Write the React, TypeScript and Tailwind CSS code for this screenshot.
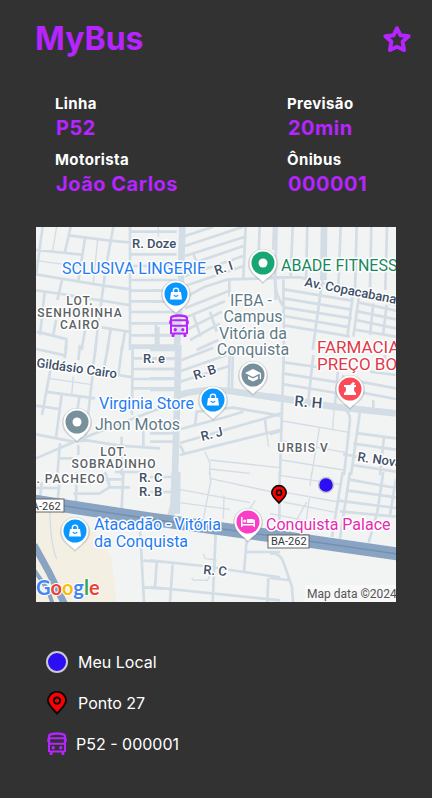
import type { ReactNode } from 'react';

type Sector = { x: number; y: number; wide?: string; roads: string; lanes?: string };

/* Street geometry, one entry per map sector. Sector units are a third of a map unit. */
const sectors: Sector[] = [
  {
    x: 30, y: 220,
    roads:
      'M18 90L155 104M18 163L220 197L303 208M18 211L95 222L303 256M38 20L18 165M122 20L105 95M115 46L240 62L303 68M165 55L145 182M250 20L228 140L203 325L196 390M300 20V390M96 180L82 240M78 300L70 345M44 215L30 345M20 335L112 358M215 322L303 336M242 328L232 390M285 334L276 390M110 358L106 390M303 35H440M303 103H440M303 138H440M303 180H440M303 212H440M303 244H440M303 276H440M303 310H440M303 346H440M303 377H440M155 390L165 330M378 310V375',
    lanes: 'M18 122L152 140M80 20L68 92M203 60L190 188M385 20V50',
  },
  {
    x: 150, y: 220,
    wide: 'M97 20L92 200L80 390',
    roads:
      'M105 48L190 20M105 78L205 45L280 20M105 108L285 50M105 138L280 78M105 168L280 108M130 100L142 135M105 198L282 138M100 235L165 200L235 178L390 174M238 178V230M287 20L280 175M329 20L326 100M372 20L370 90M105 265L238 212M105 293L225 244M110 330L215 275M120 360L210 310M130 285L152 350M180 275L200 335M140 390L205 360M375 160L377 240M0 212H55M0 245H50M25 320V375M0 345H70M0 380H70',
  },
  {
    x: 270, y: 220,
    wide: 'M162 20L160 180',
    roads:
      'M20 20L15 180M68 20L62 170M112 20L108 180M212 20L205 200M260 20L255 215M304 20L300 210M351 20L346 210M0 172H90L150 186L378 255M40 178L42 390M15 180Q15 225 42 262M42 208L245 242M42 235L245 269M42 262L245 295M42 288L240 322M42 316L240 349M157 180L128 390M250 215L232 350M268 220L250 350M265 247L378 272M262 274L378 298M258 300L378 325M250 328L378 350M350 255L340 340M310 250L300 345',
  },
  {
    x: 30, y: 345,
    roads:
      'M18 12L108 32M110 0L104 40M150 0L145 45M198 0L190 60M235 0L222 70M277 0L265 90L310 97M62 70L36 210M45 140L195 160M18 182L88 192M95 150L78 278M190 70L165 290M148 158L140 205M18 268L130 290L170 286L270 302L390 310M18 340L130 292L220 255L390 190M308 0L306 210M310 8H440M310 40H440M310 72H440M310 102H440M310 130H440M275 275V390M340 235V305M90 295L82 390M145 300V330M85 340H130',
    lanes: 'M55 100L180 118M130 95L125 150',
  },
  {
    x: 150, y: 345,
    wide: 'M85 0L82 150L75 390M88 150Q150 130 240 138L390 160',
    roads:
      'M95 45L190 8M92 78L230 30M90 110L240 62M240 0L236 130M249 0L246 135M92 252L220 218L280 200M90 294L380 210M90 330L200 302L390 255M135 240L140 200L250 188L390 212M345 225L350 265M90 300L104 328M0 15H75M0 42H75M0 72H75M0 100H75M0 135H75M0 265H75M0 290H75',
    lanes: 'M350 265L356 306M165 320L180 355L178 390M180 345L390 368M180 372L300 385',
  },
  {
    x: 270, y: 345,
    wide: 'M0 155L190 185L378 205',
    roads:
      'M42 0L30 390M130 30L115 165M42 52L140 66M42 86L205 112M42 118L200 144M205 60L195 180M270 110L378 130M272 142L378 162M310 165V195M300 80L378 90M345 30V60M270 200L243 390M218 190Q240 200 240 225L222 390M265 265L378 280M250 296L378 314M220 328L260 334M342 275L330 390M245 360L378 380M0 215L32 205M0 268L32 258M220 90L215 115',
    lanes: 'M193 185L188 250M38 228L238 262M148 250L125 390M38 288L225 322M34 345L220 375',
  },
  {
    x: 30, y: 472,
    roads:
      'M35 30L30 80M18 48H90M90 20L82 92M140 0L138 92M130 65H208L238 46H300M225 0L240 46M280 0L275 110M222 22H275M255 0H330M330 170L342 390M340 266L400 270M342 346L400 350',
    lanes: 'M60 120Q60 210 80 262',
  },
  {
    x: 150, y: 472,
    wide: 'M75 0L70 100L62 132M82 0L80 125',
    roads:
      'M197 185L188 390M290 205L282 300M0 265L160 282L282 300L390 316M0 345L390 385M20 272L15 348M68 278L60 390M290 240H390M355 318L352 390M0 15H70M0 60H70',
    lanes:
      'M160 245L166 260L200 264M125 318L130 324L172 325L184 304M180 0L182 30L160 140M88 52L300 92M88 92L240 112M222 70L220 140M182 20L390 65M316 85L295 115',
  },
  {
    x: 270, y: 472,
    roads:
      'M218 0L186 195M240 0L210 200M340 0L322 120L296 212M235 22L378 48M230 55L378 76M205 86L378 108M210 118L378 134M29 0L28 180M0 245Q30 240 42 275L66 345L69 390M0 318L55 324M378 20L360 130',
    lanes: 'M29 10L215 38M29 58L205 90M125 0L120 42M40 90L200 122M118 78L108 150M110 90L60 180M0 125L180 160',
  },
];

function StarIcon() {
  return (
    <svg viewBox="0 0 28 28" className="h-7 w-7" fill="none" stroke="#b624ff" strokeWidth="4" strokeLinejoin="round" aria-hidden="true">
      <path d="M14 3.300l3.500 7 8.100 1-5.900 5.300 1.300 8.400-7-3.200-7 3.200 1.300-8.400-5.900-5.300 8.100-1z" />
    </svg>
  );
}

function BusShape() {
  return (
    <g>
      <path
        fill="#b624ff"
        fillRule="evenodd"
        d="M4.200 .9Q10 -.2 15.800 .9Q19 1.400 19 4V20H17.400V22.200Q17.400 23 16.500 23H15.400Q14.500 23 14.500 22.200V20.400H5.500V22.200Q5.500 23 4.600 23H3.500Q2.600 23 2.600 22.200V20H1V4Q1 1.400 4.200 .9ZM4 3.600Q10 2 16 3.600Q17 4 17 5.200H3Q3 4 4 3.600ZM3.200 7.200V10.800H16.800V7.200ZM3 12.800V18.500H17V12.800Z"
      />
      <path fill="#b624ff" d="M.2 6.500H1.500V10H.2ZM18.500 6.500H19.800V10H18.500Z" />
      <circle cx="6.200" cy="15.700" r="1.700" fill="#b624ff" />
      <circle cx="13.800" cy="15.700" r="1.700" fill="#b624ff" />
    </g>
  );
}

function StopShape() {
  return (
    <g fill="#ff0000" stroke="#0a0a0a">
      <path strokeWidth="2" d="M10 22.500C6.500 18.700 1 14.300 1 9.600A9 8.800 0 0 1 19 9.600C19 14.300 13.500 18.700 10 22.500Z" />
      <circle cx="10" cy="9.600" r="3.200" strokeWidth="2" />
    </g>
  );
}

function PlacePin({ x, y, color, children }: { x: number; y: number; color: string; children: ReactNode }) {
  return (
    <g transform={`translate(${x} ${y})`}>
      <path d="M0 21C-4 16-15 11-15 1A15 15 0 0 1 15 1C15 11 4 16 0 21Z" fill="#8b9299" opacity=".35" />
      <path d="M0 19C-4 14.500-13.500 10-13.500 0A13.500 13.500 0 0 1 13.500 0C13.500 10 4 14.500 0 19Z" fill="#fff" />
      <circle r="11.500" fill={color} />
      {children}
    </g>
  );
}

function Bag() {
  return (
    <g>
      <path d="M-5-2H5L6 5.500H-6Z" fill="#fff" />
      <path d="M-2.600-1V-3.300A2.600 2.600 0 0 1 2.600-3.300V-1" fill="none" stroke="#fff" strokeWidth="1.400" />
      <path d="M-2.200 1.200Q0 3.600 2.200 1.200" fill="none" stroke="#0a96ff" strokeWidth="1.100" />
    </g>
  );
}

function CityMap() {
  return (
    <svg viewBox="36 227 360 375" className="block h-auto w-full bg-[#f2f3f3]" role="img" aria-label="Mapa da linha P52">
      <path d="M36 510L62 511L90 527L111 556L117 602H36Z" fill="#f4efe3" />
      <g fill="none" stroke="#d3dde5" strokeLinejoin="round">
        {sectors.map((s) => (
          <g key={`${s.x}-${s.y}`} transform={`translate(${s.x} ${s.y}) scale(.33333)`}>
            {s.lanes && <path d={s.lanes} strokeWidth="4" />}
            <path d={s.roads} strokeWidth="8" />
            {s.wide && <path d={s.wide} strokeWidth="20" />}
          </g>
        ))}
      </g>
      <g fill="none">
        <path d="M34 501L65 506L150 519L280 537L398 554" stroke="#89a3c2" strokeWidth="13" />
        <path d="M34 501L65 506L150 519L280 537L398 554" stroke="#7390b4" strokeWidth="1.500" />
        <path d="M34 545L49 572L65 605" stroke="#89a3c2" strokeWidth="7" />
        <path d="M34 570L48 590L53 605" stroke="#89a3c2" strokeWidth="4" />
      </g>

      <g stroke="#fff" strokeWidth="3" strokeLinejoin="round" paintOrder="stroke" fontFamily="Roboto, sans-serif">
        <g fill="#3d5068" fontSize="13" fontWeight="500">
          <text x="132" y="248">R. Doze</text>
          <text x="216" y="275" transform="rotate(-18 216 275)">R. I</text>
          <text x="304" y="286" transform="rotate(11 304 286)">Av. Copacabana</text>
          <text x="143" y="363">R. e</text>
          <text x="36" y="367" transform="rotate(8 36 367)">Gildásio Cairo</text>
          <text x="195" y="380" transform="rotate(-18 195 380)">R. B</text>
          <text x="202" y="441" transform="rotate(-14 202 441)">R. J</text>
          <text x="294" y="406" fontSize="15" transform="rotate(5 294 406)">R. H</text>
          <text x="357" y="461" transform="rotate(8 357 461)">R. Nova</text>
          <text x="139" y="482">R. C</text>
          <text x="139" y="496">R. B</text>
          <text x="203" y="574" transform="rotate(5 203 574)">R. C</text>
        </g>
        <g fill="#5b6166" fontSize="12" fontWeight="500" letterSpacing="1" textAnchor="middle">
          <text x="80" y="305">LOT.</text>
          <text x="80" y="317">SENHORINHA</text>
          <text x="80" y="329">CAIRO</text>
          <text x="114" y="456">LOT.</text>
          <text x="114" y="468">SOBRADINHO</text>
          <text x="303" y="452">URBIS V</text>
          <text x="71" y="483">. PACHECO</text>
        </g>
        <g fontSize="16">
          <g fill="#1f7cf2">
            <text x="62" y="274">SCLUSIVA LINGERIE</text>
            <text x="99" y="409">Virginia Store</text>
            <text x="94" y="530">Atacadão - Vitória</text>
            <text x="94" y="547">da Conquista</text>
          </g>
          <g fill="#5f7b88">
            <text x="95" y="430" fontSize="16">Jhon Motos</text>
            <g textAnchor="middle">
              <text x="251" y="306">IFBA -</text>
              <text x="253" y="322">Campus</text>
              <text x="253" y="339">Vitória da</text>
              <text x="253" y="355">Conquista</text>
            </g>
          </g>
          <text x="281" y="271" fill="#168a5e">ABADE FITNESS</text>
          <g fill="#e03a48" fontSize="17">
            <text x="317" y="353">FARMACIA</text>
            <text x="317" y="370">PREÇO BOM</text>
          </g>
          <text x="266" y="530" fill="#e52cb0">Conquista Palace</text>
        </g>
      </g>

      <g fontFamily="Roboto, sans-serif" fontSize="11" fill="#35393d">
        <rect x="20" y="499" width="44" height="13" fill="#fff" stroke="#666" />
        <text x="25" y="510">BA-262</text>
        <rect x="268" y="535" width="41" height="13" fill="#fff" stroke="#666" />
        <text x="271" y="545">BA-262</text>
      </g>

      <PlacePin x={176} y={294} color="#0a96ff"><Bag /></PlacePin>
      <PlacePin x={213} y={400} color="#0a96ff"><Bag /></PlacePin>
      <PlacePin x={75} y={531} color="#0a96ff"><Bag /></PlacePin>
      <PlacePin x={263} y={263} color="#18a673"><circle r="4.500" fill="#fff" /></PlacePin>
      <PlacePin x={77} y={422} color="#78909c"><circle r="4.500" fill="#fff" /></PlacePin>
      <PlacePin x={253} y={375} color="#78909c">
        <path d="M0-6L8-2L0 2L-8-2ZM-5 1L0 3.500L5 1V4L0 6.500L-5 4ZM6.800-1.500H8V4H6.800Z" fill="#fff" />
      </PlacePin>
      <PlacePin x={350} y={389} color="#fb4b57">
        <path d="M-6-4H0L3-7L5-6L4-4H6V-2H4.500Q3 2 6 4V6H-6V4Q-3 2-4.500-2H-6Z" fill="#fff" />
      </PlacePin>
      <PlacePin x={248} y={522} color="#fa3fc6">
        <path d="M-7-5H-5.500V2H5.500V-1Q5.500-2.500 7-2.500V5H5.500V3.500H-5.500V5H-7ZM-1-3H4.500Q6-3 6-1V1H-1Z" fill="#fff" />
        <circle cx="-3.200" cy="-1" r="1.600" fill="#fff" />
      </PlacePin>

      <text x="36" y="595" fontFamily="Lato, sans-serif" fontSize="20" fontWeight="700" stroke="#fff" strokeWidth="2" paintOrder="stroke">
        <tspan fill="#4285f4">G</tspan>
        <tspan fill="#ea4335">o</tspan>
        <tspan fill="#fbbc05">o</tspan>
        <tspan fill="#4285f4">g</tspan>
        <tspan fill="#34a853">l</tspan>
        <tspan fill="#ea4335">e</tspan>
      </text>
      <rect x="305" y="585" width="91" height="17" fill="#f8f8f8" />
      <text x="307" y="598" fontFamily="Roboto, sans-serif" fontSize="12" fill="#555">Map data ©2024</text>

      <g transform="translate(169 314)"><BusShape /></g>
      <g transform="translate(271 485) scale(.8)"><StopShape /></g>
      <circle cx="326" cy="485" r="7.500" fill="#2b0ff2" stroke="#c9c9cf" strokeWidth="1.500" />
    </svg>
  );
}

function Info({ label, value }: { label: string; value: string }) {
  return (
    <div>
      <dt className="text-[15px] leading-5 font-bold tracking-wide text-white">{label}</dt>
      <dd className="pl-px text-xl leading-7 font-bold tracking-wide text-[#b624ff]">{value}</dd>
    </div>
  );
}

export default function App() {
  return (
    <main className="min-h-screen bg-[#323232] pb-10 font-['Inter',sans-serif]">
      <header className="flex items-center justify-between pt-[19px] pr-[21px] pl-[35px]">
        <h1 className="text-[32px] leading-10 font-bold text-[#b624ff]">MyBus</h1>
        <button type="button" aria-label="Favoritar linha" className="cursor-pointer">
          <StarIcon />
        </button>
      </header>

      <dl className="mt-[35px] grid grid-cols-[8fr_5fr] gap-y-2 pl-[55px]">
        <Info label="Linha" value="P52" />
        <Info label="Previsão" value="20min" />
        <Info label="Motorista" value="João Carlos" />
        <Info label="Ônibus" value="000001" />
      </dl>

      <section className="mt-[29px] px-9">
        <CityMap />
      </section>

      <ul className="mt-12 flex flex-col gap-[17px] px-[46px] text-base leading-6 text-white">
        <li className="flex items-center gap-2.5">
          <span className="h-[22px] w-[22px] rounded-full border-2 border-[#c9c9cf] bg-[#2b0ff2]" />
          Meu Local
        </li>
        <li className="flex items-center gap-2.5">
          <svg viewBox="-1 0 22 24" className="h-6 w-[22px]" aria-hidden="true"><StopShape /></svg>
          Ponto 27
        </li>
        <li className="flex items-center gap-2">
          <svg viewBox="-1 0 22 24" className="h-6 w-[22px]" aria-hidden="true"><BusShape /></svg>
          P52 - 000001
        </li>
      </ul>
    </main>
  );
}
